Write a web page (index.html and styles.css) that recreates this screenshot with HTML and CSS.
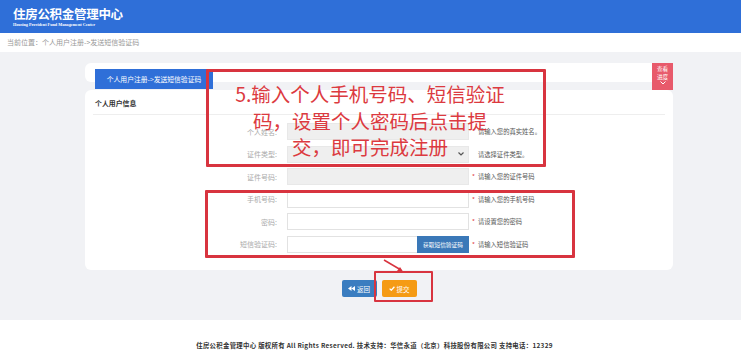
FILE: index.html
```html
<!DOCTYPE html>
<html lang="zh-CN">
<head>
    <meta charset="UTF-8">
    <meta name="viewport" content="width=device-width, initial-scale=1.0">
    <title>发送短信验证码</title>
    <link rel="stylesheet" href="styles.css">
</head>
<body>

    <header class="topbar">
        <div class="logo">
            <div class="logo-cn">住房公积金管理中心</div>
            <div class="logo-en">Housing Provident Fund Management Center</div>
        </div>
    </header>

    <div class="crumb">当前位置：个人用户注册-&gt;发送短信验证码</div>

    <main class="page">
        <div class="wrap">
            <div class="tabrow">
                <div class="tabstrip">
                    <span class="tab">个人用户注册-&gt;发送短信验证码</span>
                </div>
                <a class="progress" href="#">
                    <span>查看</span>
                    <span>进度</span>
                    <svg width="6" height="4" viewBox="0 0 6 4"><path d="M0.5 0.5 L3 3 L5.5 0.5" fill="none" stroke="#fff" stroke-width="1"/></svg>
                </a>
            </div>

            <section class="card">
                <h2 class="card-title">个人用户信息</h2>
                <form class="form">
                    <label>个人姓名:</label>
                    <input type="text" class="filled">
                    <span class="hint"><i>*</i>请输入您的真实姓名。</span>

                    <label>证件类型:</label>
                    <div class="select filled">
                        <svg width="6" height="4" viewBox="0 0 6 4"><path d="M0.5 0.5 L3 3 L5.5 0.5" fill="none" stroke="#555" stroke-width="1.2"/></svg>
                    </div>
                    <span class="hint"><i class="blank">*</i>请选择证件类型。</span>

                    <label>证件号码:</label>
                    <input type="text" class="filled">
                    <span class="hint"><i>*</i>请输入您的证件号码</span>

                    <label>手机号码:</label>
                    <input type="text">
                    <span class="hint"><i>*</i>请输入您的手机号码</span>

                    <label>密码:</label>
                    <input type="password">
                    <span class="hint"><i>*</i>请设置您的密码</span>

                    <label>短信验证码:</label>
                    <div class="codebox">
                        <input type="text">
                        <button type="button" class="getcode">获取短信验证码</button>
                    </div>
                    <span class="hint"><i>*</i>请输入短信验证码</span>
                </form>
            </section>

            <div class="actions">
                <button type="button" class="btn btn-back">
                    <svg width="7" height="5" viewBox="0 0 7 5"><path d="M3.5 0 L0 2.5 L3.5 5 Z M7 0 L3.5 2.5 L7 5 Z" fill="#fff"/></svg>返回
                </button>
                <button type="button" class="btn btn-submit">
                    <svg width="6" height="5" viewBox="0 0 6 5"><path d="M0.6 2.6 L2.3 4.2 L5.4 0.8" fill="none" stroke="#fff" stroke-width="1.3"/></svg>提交
                </button>
            </div>
        </div>
    </main>

    <footer class="footer">
        住房公积金管理中心 版权所有 All Rights Reserved. 技术支持：华信永道（北京）科技股份有限公司 支持电话：12329
    </footer>

    <!-- 标注 -->
    <div class="mark mark-1">5.输入个人手机号码、短信验证<br>码，设置个人密码后点击提<br>交，即可完成注册</div>
    <div class="mark mark-2"></div>
    <div class="mark mark-3"></div>
    <svg class="mark-arrow" width="24" height="16" viewBox="0 0 24 16">
        <path d="M2 1 L19 11" stroke="#d8343f" stroke-width="1.5" fill="none"/>
        <path d="M21 12.5 L15 12 L18 8 Z" fill="#d8343f"/>
    </svg>

</body>
</html>
```

FILE: styles.css
```css
body {
    font-family: "Noto Sans CJK SC", "Noto Sans", sans-serif;
    margin: 0;
    color: #333;
    background-color: #fff;
    position: relative;
    height: 360px;
    overflow: hidden;
}
.topbar {
    height: 33px;
    background-color: #2f6fd8;
    color: #fff;
    padding-left: 13px;
    display: flex;
    align-items: center;
}
.logo {
    padding-top: 1px;
}
.logo-cn {
    font-size: 12.5px;
    font-weight: bold;
    line-height: 13px;
    letter-spacing: -0.3px;
    margin-bottom: 2px;
}
.logo-en {
    font-family: "Liberation Serif", serif;
    font-size: 4.2px;
    font-weight: bold;
    line-height: 5px;
    white-space: nowrap;
}
.crumb {
    height: 19px;
    line-height: 19px;
    padding-left: 7px;
    font-size: 7px;
    color: #999;
}
.page {
    background-color: #f1f2f5;
    height: 268px;
    padding-top: 11px;
    box-sizing: border-box;
}
.wrap {
    margin-left: 85px;
    width: 588px;
}
.tabrow {
    display: flex;
    align-items: flex-start;
}
.tabstrip {
    flex: 1;
    height: 19px;
    background-color: #fff;
    border-radius: 6px 0 0 6px;
    padding-left: 10px;
}
.tab {
    display: inline-block;
    width: 118px;
    height: 20px;
    line-height: 20px;
    background-color: #2f6fd8;
    color: #fff;
    font-size: 6.8px;
    text-align: center;
}
.progress {
    width: 21px;
    height: 27px;
    background-color: #e85a6b;
    color: #fff;
    font-size: 5.6px;
    text-decoration: none;
    padding-top: 3px;
    box-sizing: border-box;
    display: flex;
    flex-direction: column;
    align-items: center;
    gap: 1px;
}
.progress span {
    line-height: 6.5px;
}
.card {
    background-color: #fff;
    border-radius: 6px;
    height: 180px;
    padding: 0 8px;
}
.card-title {
    margin: 0;
    font-size: 6.9px;
    font-weight: bold;
    line-height: 10px;
    padding: 8px 0 6px 2px;
    border-bottom: 1px solid #eeeeee;
}
.form {
    display: grid;
    grid-template-columns: 184px 182px auto;
    grid-auto-rows: 17px;
    row-gap: 5.6px;
    column-gap: 10px;
    align-items: center;
    padding-top: 8px;
}
.form label {
    font-size: 7px;
    color: #aaa;
    text-align: right;
}
.form input,
.select {
    height: 17px;
    box-sizing: border-box;
    border: 1px solid #e2e2e2;
    background-color: #fff;
    margin: 0;
    padding: 0 4px;
    width: 100%;
}
.filled {
    background-color: #efefef !important;
    border-color: #e8e8e8 !important;
}
.select {
    display: flex;
    align-items: center;
    justify-content: flex-end;
    padding-right: 4px;
}
.hint {
    font-size: 6.3px;
    color: #555;
    margin-left: -7px;
    white-space: nowrap;
}
.hint i {
    font-style: normal;
    color: #e03a3a;
    margin-right: 3px;
}
.hint i.blank {
    visibility: hidden;
}
.codebox {
    display: flex;
    height: 17px;
}
.codebox input {
    flex: 1;
    border-right: none;
}
.getcode {
    width: 52px;
    height: 17px;
    border: none;
    background-color: #3a78b8;
    color: #fff;
    font-family: inherit;
    font-size: 5.7px;
    padding: 0;
}
.actions {
    display: flex;
    justify-content: center;
    gap: 5px;
    margin-top: 10px;
}
.btn {
    width: 35px;
    height: 17px;
    border: none;
    border-radius: 2px;
    color: #fff;
    font-family: inherit;
    font-size: 6.5px;
    padding: 0;
    display: flex;
    align-items: center;
    justify-content: center;
    gap: 2px;
}
.btn-back {
    background-color: #3a7dc0;
}
.btn-submit {
    background-color: #f59b14;
}
.footer {
    height: 52px;
    line-height: 52px;
    text-align: center;
    font-size: 6.4px;
    letter-spacing: 0.3px;
    font-weight: bold;
    color: #333;
    padding-left: 8px;
    white-space: nowrap;
}
.mark {
    position: absolute;
    border: 3px solid #d8343f;
    box-sizing: border-box;
    border-radius: 1px;
}
.mark-1 {
    left: 206px;
    top: 69px;
    width: 340px;
    height: 98px;
    color: #dc3a40;
    font-size: 19.5px;
    line-height: 26.5px;
    text-align: center;
    padding: 9px 12px 0 0;
    white-space: nowrap;
}
.mark-2 {
    left: 205px;
    top: 190px;
    width: 370px;
    height: 68px;
}
.mark-3 {
    left: 374px;
    top: 271px;
    width: 59px;
    height: 31px;
    border-width: 2px;
}
.mark-arrow {
    position: absolute;
    left: 382px;
    top: 259px;
}
```
